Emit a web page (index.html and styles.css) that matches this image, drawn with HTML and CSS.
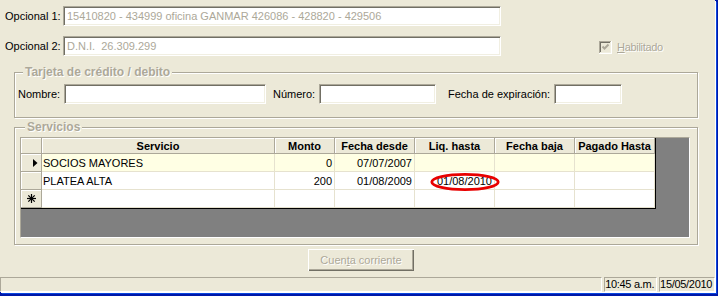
FILE: index.html
```html
<!DOCTYPE html>
<html>
<head>
<meta charset="utf-8">
<link rel="stylesheet" href="styles.css">
</head>
<body>
<div class="win">
  <div class="field-row r1">
    <span class="lbl w58">Opcional 1:</span>
    <div class="tb w438 dis">15410820 - 434999 oficina GANMAR 426086 - 428820 - 429506</div>
  </div>
  <div class="field-row r2">
    <span class="lbl w58">Opcional 2:</span>
    <div class="tb w438 dis">D.N.I.&nbsp; 26.309.299</div>
    <div class="chk">
      <svg width="13" height="13" viewBox="0 0 13 13">
        <rect x="0" y="0" width="13" height="13" fill="#fff"/>
        <rect x="0" y="0" width="12" height="12" fill="#ACA899"/>
        <rect x="1" y="1" width="11" height="11" fill="#F1EFE2"/>
        <rect x="1" y="1" width="10" height="10" fill="#716F64"/>
        <rect x="2" y="2" width="9" height="9" fill="#ECE9D8"/>
        <polyline points="3.5,5.5 5.5,7.5 9.5,3.5" fill="none" stroke="#ACA899" stroke-width="2"/>
      </svg>
      <span class="chk-lbl"><u>H</u>abilitado</span>
    </div>
  </div>

  <fieldset class="grp g1">
    <legend>Tarjeta de crédito / debito</legend>
    <div class="field-row">
      <span class="lbl w46">Nombre:</span>
      <div class="tb w202"></div>
      <span class="lbl w46 ml7">Número:</span>
      <div class="tb w117"></div>
      <span class="lbl w106 ml12">Fecha de expiración:</span>
      <div class="tb w68"></div>
    </div>
  </fieldset>

  <fieldset class="grp g2">
    <legend>Servicios</legend>
    <div class="gridframe">
      <div class="tbl">
        <div class="sel"></div>
        <div class="h">Servicio</div>
        <div class="h">Monto</div>
        <div class="h">Fecha desde</div>
        <div class="h">Liq. hasta</div>
        <div class="h">Fecha baja</div>
        <div class="h">Pagado Hasta</div>

        <div class="sel end"><svg width="5" height="8" viewBox="0 0 5 8"><polygon points="0,0 4.5,4 0,8" fill="#000"/></svg></div>
        <div class="c y">SOCIOS MAYORES</div>
        <div class="c y r">0</div>
        <div class="c y r">07/07/2007</div>
        <div class="c y r"></div>
        <div class="c y r"></div>
        <div class="c y r"></div>

        <div class="sel"></div>
        <div class="c">PLATEA ALTA</div>
        <div class="c r">200</div>
        <div class="c r">01/08/2009</div>
        <div class="c r">01/08/2010</div>
        <div class="c r"></div>
        <div class="c r"></div>

        <div class="sel"><svg width="9" height="9" viewBox="0 0 9 9"><g stroke="#000" stroke-width="1.2"><line x1="4.5" y1="0" x2="4.5" y2="9"/><line x1="0" y1="4.5" x2="9" y2="4.5"/><line x1="1.3" y1="1.3" x2="7.7" y2="7.7"/><line x1="7.7" y1="1.3" x2="1.3" y2="7.7"/></g></svg></div>
        <div class="c"></div>
        <div class="c"></div>
        <div class="c"></div>
        <div class="c"></div>
        <div class="c"></div>
        <div class="c"></div>
      </div>
      <svg class="mark" width="74" height="22" viewBox="0 0 74 22">
        <ellipse cx="37" cy="11" rx="33.2" ry="7.6" fill="none" stroke="#E80000" stroke-width="2.8"/>
      </svg>
    </div>
  </fieldset>

  <div class="btn-row">
    <button class="btn" disabled>Cuen<u>t</u>a corriente</button>
  </div>

  <div class="status">
    <div class="pnl p1"></div>
    <div class="pnl p2">10:45 a.m.</div>
    <div class="pnl p3">15/05/2010</div>
  </div>
</div>
</body>
</html>
```

FILE: styles.css
```css
* { box-sizing: border-box; }
html, body { margin: 0; padding: 0; }
body {
  width: 718px;
  height: 296px;
  overflow: hidden;
  background: #0019A8;
  font: 11px "Liberation Sans", Arial, sans-serif;
  color: #000;
}
.win {
  width: 715px;
  height: 292px;
  background: #ECE9D8;
  box-shadow: 1px 1px 0 #fff, 2px 2px 0 #0A46E0;
  display: flex;
  flex-direction: column;
}
.field-row {
  display: flex;
  align-items: center;
  height: 20px;
}
.r1 { margin-top: 6px; padding-left: 5px; }
.r2 { margin-top: 10px; padding-left: 5px; }
.lbl { white-space: nowrap; }
.w58 { width: 58px; }
.w46 { width: 46px; }
.w106 { width: 106px; }
.ml7 { margin-left: 7px; }
.ml12 { margin-left: 12px; }
.tb {
  height: 20px;
  background: #fff;
  border-top: 1px solid #ACA899;
  border-left: 1px solid #ACA899;
  border-right: 1px solid #fff;
  border-bottom: 1px solid #fff;
  box-shadow: inset 1px 1px 0 #716F64, inset -1px -1px 0 #F1EFE2;
  padding-left: 3px;
  line-height: 18px;
  white-space: nowrap;
  overflow: hidden;
}
.w438 { width: 438px; }
.w202 { width: 202px; }
.w117 { width: 117px; }
.w68 { width: 68px; }
.dis { color: #ACA899; }

.chk {
  display: flex;
  align-items: center;
  margin-left: 98px;
  margin-top: 2px;
}
.chk svg { display: block; }
.chk-lbl {
  margin-left: 5px;
  color: #ACA899;
  text-shadow: 1px 1px 0 #fff;
  letter-spacing: -0.3px;
}

.grp {
  margin: 0 0 0 14px;
  width: 684px;
  min-width: 0;
  border: 1px solid #ACA899;
  box-shadow: inset 1px 1px 0 #fff, 1px 1px 0 #fff;
}
.grp legend {
  margin-left: 5px;
  padding: 0 2px;
  background: #ECE9D8;
  font: bold 12px/14px "Liberation Sans", Arial, sans-serif;
  color: #ACA899;
  text-shadow: 1px 1px 0 #fff;
}
.g1 { margin-top: 9px; padding: 5px 0 13px 3px; }
.g2 { margin-top: 2px; padding: 3px 7px 6px 5px; }

.gridframe {
  position: relative;
  width: 670px;
  height: 101px;
  background: #808080;
  border-top: 1px solid #ACA899;
  border-left: 1px solid #ACA899;
  border-right: 1px solid #fff;
  border-bottom: 1px solid #fff;
}
.tbl {
  display: grid;
  grid-template-columns: 21px 233px 60px 80px 80px 80px 80px;
  grid-template-rows: 16px 18px 18px 18px;
  width: max-content;
  border-right: 1px solid #000;
  border-bottom: 1px solid #000;
}
.h {
  background: #ECE9D8;
  border-right: 1px solid #ACA899;
  border-bottom: 1px solid #ACA899;
  box-shadow: inset 1px 1px 0 #fff;
  font-weight: bold;
  text-align: center;
  line-height: 14px;
  padding-top: 1px;
  white-space: nowrap;
  overflow: hidden;
}
.sel {
  background: #ECE9D8;
  border-right: 1px solid #ACA899;
  border-bottom: 1px solid #ACA899;
  box-shadow: inset 1px 1px 0 #fff;
  display: flex;
  align-items: center;
  justify-content: center;
}
.sel svg { display: block; }
.sel.end { justify-content: flex-end; padding-right: 3px; }
.c {
  background: #fff;
  border-right: 1px solid #E6E2CF;
  border-bottom: 1px solid #E6E2CF;
  line-height: 16px;
  padding: 1px 2px 0 1px;
  white-space: nowrap;
  overflow: hidden;
}
.c.y { background: #FFFFE4; }
.c.r { text-align: right; }
.mark {
  position: absolute;
  left: 407px;
  top: 33px;
}

.btn-row {
  margin-top: 4px;
  padding-left: 308px;
  height: 22px;
}
.btn {
  display: block;
  width: 106px;
  height: 22px;
  padding: 0;
  border: none;
  background: #ECE9D8;
  box-shadow: inset 1px 1px 0 #fff, inset -1px -1px 0 #716F64, inset -2px -2px 0 #ACA899;
  font: 11px "Liberation Sans", Arial, sans-serif;
  color: #ACA899;
  text-shadow: 1px 1px 0 #fff;
}

.status {
  margin-top: 6px;
  display: flex;
  gap: 2px;
  height: 15px;
}
.pnl {
  height: 15px;
  border-top: 1px solid #ACA899;
  border-left: 1px solid #ACA899;
  border-right: 1px solid #fff;
  border-bottom: 1px solid #fff;
  line-height: 13px;
  white-space: nowrap;
  overflow: hidden;
  letter-spacing: -0.3px;
}
.p1 { width: 603px; }
.p2 { width: 53px; }
.p3 { width: 56px; }
```
